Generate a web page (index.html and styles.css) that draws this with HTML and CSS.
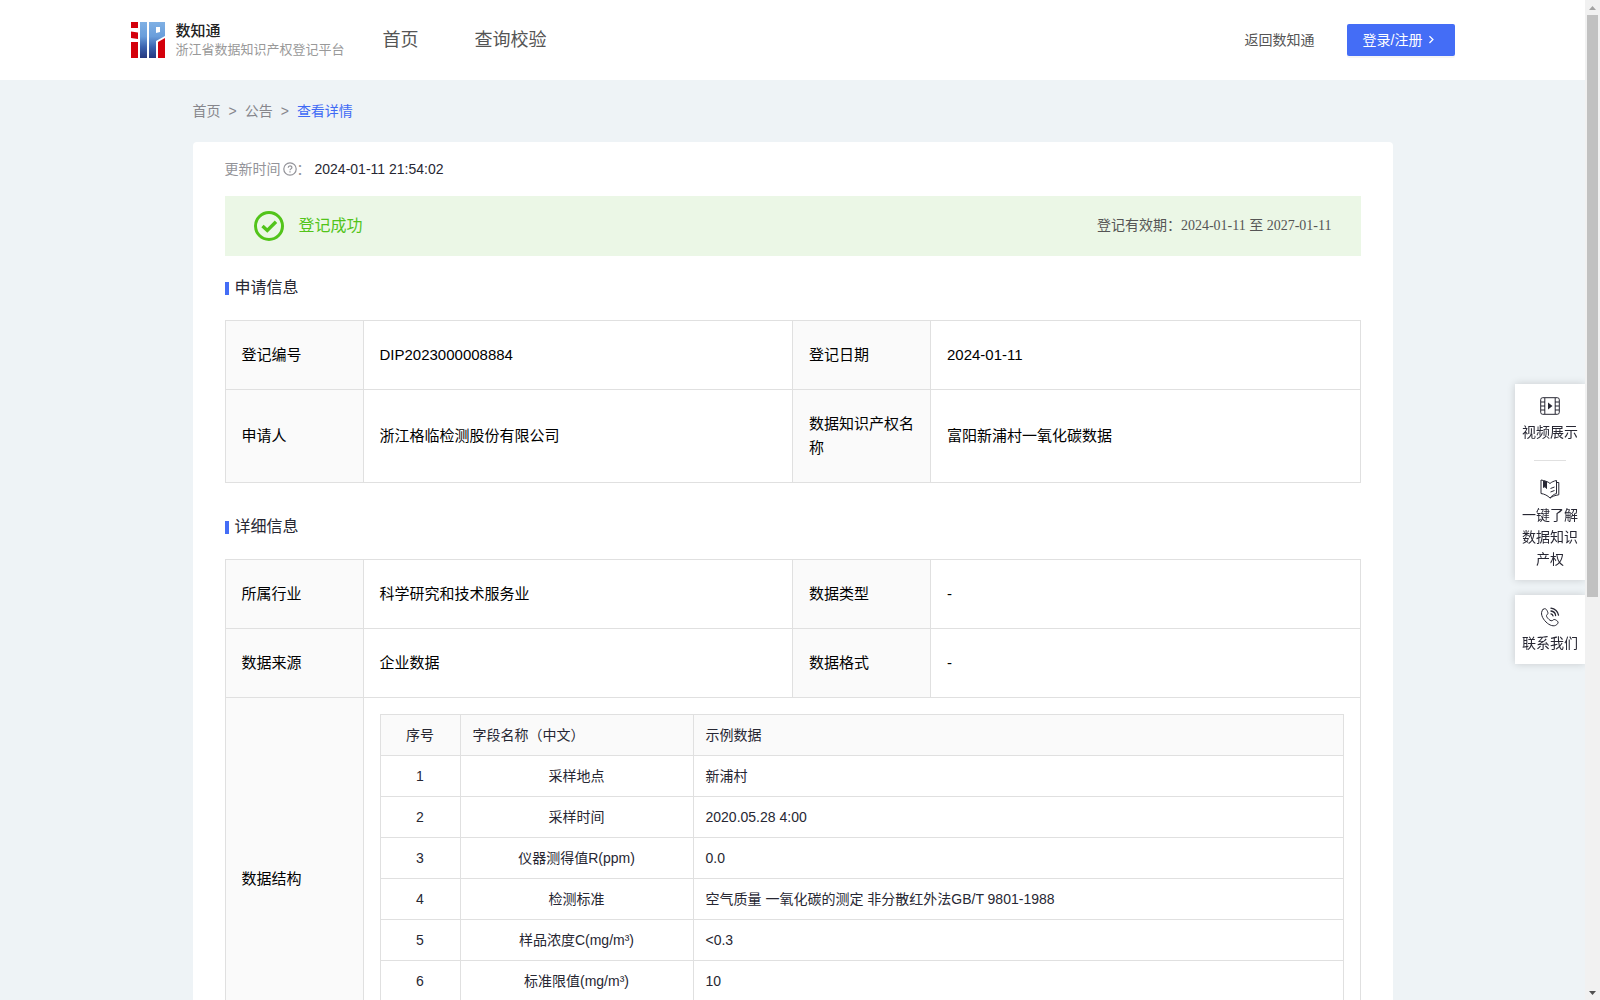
FILE: index.html
```html
<!DOCTYPE html>
<html lang="zh-CN">
<head>
<meta charset="utf-8">
<meta name="viewport" content="width=device-width, initial-scale=1">
<title>数知通 - 查看详情</title>
<link rel="stylesheet" href="styles.css">
</head>
<body>
<div class="page">
  <header class="header">
    <div class="header-inner">
      <a class="brand" href="#">
        <svg class="brand-logo" viewBox="0 0 34 36" aria-hidden="true">
          <defs>
            <linearGradient id="blue" x1="0" y1="0" x2="0" y2="1">
              <stop offset="0" stop-color="#7fb0e4"/>
              <stop offset=".4" stop-color="#6a9edb"/>
              <stop offset=".7" stop-color="#3b62ae"/>
              <stop offset="1" stop-color="#26387f"/>
            </linearGradient>
          </defs>
          <path fill="#d4000b" d="M0 0h7v6H0zM0 9.500l7 1V17l-7-1zM0 20h7v16H0zM27 20l7-4v20h-7z"/>
          <path fill="url(#blue)" d="M9 0h7v36H9zM18 0h16v14l-9 5v17h-7zM25 5v6l4-1V5z" fill-rule="evenodd"/>
        </svg>
        <span class="brand-text">
          <span class="brand-name">数知通</span>
          <span class="brand-sub">浙江省数据知识产权登记平台</span>
        </span>
      </a>
      <nav class="nav">
        <a href="#">首页</a>
        <a href="#">查询校验</a>
      </nav>
      <div class="header-actions">
        <a class="back" href="#">返回数知通</a>
        <button class="login" type="button">
          <span>登录/注册</span>
          <svg width="14" height="14" viewBox="0 0 14 14" fill="none" stroke="currentColor" stroke-width="1.500" aria-hidden="true"><path d="M4 2.500 8 6.500l-4 4"/></svg>
        </button>
      </div>
    </div>
  </header>

  <main class="main">
    <nav class="crumbs" aria-label="面包屑">
      <a href="#">首页</a><span>&gt;</span><a href="#">公告</a><span>&gt;</span><a class="current" href="#">查看详情</a>
    </nav>

    <div class="card">
      <div class="updated">
        <span>更新时间</span>
        <svg width="14" height="14" viewBox="0 0 14 14" fill="none" stroke="currentColor" stroke-width="1.200" aria-hidden="true">
          <circle cx="7" cy="7" r="6.200"/><path d="M5.200 5.800c0-2.500 3.700-2.500 3.700-.200 0 1.200-1.900 1.400-1.900 2.700M7 9.300v1.200"/>
        </svg>
        <span>：</span>
        <time class="updated-time">2024-01-11 21:54:02</time>
      </div>

      <div class="banner">
        <svg width="30" height="30" viewBox="0 0 30 30" fill="none" stroke="#52c41a" aria-hidden="true">
          <circle cx="15" cy="15" r="13.500" stroke-width="3"/><path d="m8.500 15 4.800 4.500 8.700-8.700" stroke-width="3.400"/>
        </svg>
        <span class="banner-title">登记成功</span>
        <span class="validity">登记有效期：2024-01-11 至 2027-01-11</span>
      </div>

      <section class="section">
        <h2>申请信息</h2>
        <table class="info">
          <colgroup><col class="label-col"><col><col class="label-col"><col></colgroup>
          <tbody>
            <tr><th scope="row">登记编号</th><td>DIP2023000008884</td><th scope="row">登记日期</th><td>2024-01-11</td></tr>
            <tr><th scope="row">申请人</th><td>浙江格临检测股份有限公司</td><th scope="row">数据知识产权名称</th><td>富阳新浦村一氧化碳数据</td></tr>
          </tbody>
        </table>
      </section>

      <section class="section section-detail">
        <h2>详细信息</h2>
        <table class="info">
          <colgroup><col class="label-col"><col><col class="label-col"><col></colgroup>
          <tbody>
            <tr><th scope="row">所属行业</th><td>科学研究和技术服务业</td><th scope="row">数据类型</th><td>-</td></tr>
            <tr><th scope="row">数据来源</th><td>企业数据</td><th scope="row">数据格式</th><td>-</td></tr>
            <tr>
              <th scope="row">数据结构</th>
              <td class="nested" colspan="3">
                <table class="fields">
                  <colgroup><col class="index-col"><col class="name-col"><col></colgroup>
                  <thead><tr><th class="center" scope="col">序号</th><th scope="col">字段名称（中文）</th><th scope="col">示例数据</th></tr></thead>
                  <tbody>
                    <tr><td>1</td><td>采样地点</td><td>新浦村</td></tr>
                    <tr><td>2</td><td>采样时间</td><td>2020.05.28 4:00</td></tr>
                    <tr><td>3</td><td>仪器测得值R(ppm)</td><td>0.0</td></tr>
                    <tr><td>4</td><td>检测标准</td><td>空气质量 一氧化碳的测定 非分散红外法GB/T 9801-1988</td></tr>
                    <tr><td>5</td><td>样品浓度C(mg/m³)</td><td>&lt;0.3</td></tr>
                    <tr><td>6</td><td>标准限值(mg/m³)</td><td>10</td></tr>
                    <tr><td></td><td></td><td></td></tr>
                  </tbody>
                </table>
              </td>
            </tr>
          </tbody>
        </table>
      </section>
    </div>
  </main>
</div>

<aside class="tools">
  <div class="tool-card">
    <a class="tool" href="#">
      <svg width="20" height="20" viewBox="0 0 20 20" fill="none" stroke="currentColor" aria-hidden="true">
        <rect x=".700" y="1.700" width="18.600" height="16.600" rx="2"/><path d="M4.800 2v16M15.200 2v16M1 6h4M1 10h4M1 14h4M15 6h4M15 10h4M15 14h4"/><path fill="currentColor" stroke="none" d="M8 6.500v7l4.500-3.500z"/>
      </svg>
      <span>视频展示</span>
    </a>
    <hr>
    <a class="tool" href="#">
      <svg width="20" height="20" viewBox="0 0 20 20" fill="none" stroke="currentColor" stroke-linejoin="round" aria-hidden="true">
        <path d="M10 4.500C8 2.500 4 1.500 1 1v13.500c3.500.500 6.500 2 9 4.500 1.500-2 3.500-3.500 6.500-4.500V1.500C14 2 11.500 3 10 4.500z"/><path d="M10 19.300c2-1.800 5-3 8.800-3.500V3.500h-2M10.500 9.500l4-1.500M10.500 13l4-1.500"/><path fill="currentColor" d="M3.500 2v6.500l1.500-1 1.500 2V3z"/>
      </svg>
      <span>一键了解数据知识产权</span>
    </a>
  </div>
  <div class="tool-card">
    <a class="tool" href="#">
      <svg width="20" height="20" viewBox="0 0 20 20" fill="none" stroke="currentColor" stroke-linejoin="round" stroke-linecap="round" aria-hidden="true">
        <path d="M3 2.500C4.500 1 6 1.500 7 3.500s1.300 2.800.500 3.700c-1 1-1.500 1.500-.500 3s2.500 3 4 3.500 2-1 3-1.200 2.500.800 3.500 1.700c1.200 1 .500 2.300-.800 3.500C14 20 9.500 18.500 6 15S-.500 6 3 2.500z"/><path stroke-width="1.300" d="M11 4c2.500.300 4.300 2 4.600 4.500M11 6.800c1.200.200 1.700.900 2 2M11 1.200c4 .300 7 3.500 7.500 7"/>
      </svg>
      <span>联系我们</span>
    </a>
  </div>
</aside>

<div class="scrollbar" aria-hidden="true">
  <svg width="15" height="15" viewBox="0 0 15 15"><path fill="#a3a3a3" d="M4 10h7L7.500 6z"/></svg>
  <div class="track"><div class="thumb"></div></div>
  <svg width="15" height="15" viewBox="0 0 15 15"><path fill="#505050" d="M4 6h7l-3.500 4z"/></svg>
</div>
</body>
</html>
```
FILE: styles.css
```css
* { box-sizing: border-box; }

body {
  display: flex;
  height: 100vh;
  margin: 0;
  overflow: hidden;
  background: #eef3f6;
  color: #272733;
  font: 14px/22px "Liberation Sans", "Noto Sans CJK SC", sans-serif;
}

a { color: inherit; text-decoration: none; }

.page {
  flex: 1;
  min-width: 0;
  overflow-y: auto;
  scrollbar-width: none;
}

/* Header */
.header { background: #fff; }

.header-inner {
  display: flex;
  align-items: center;
  max-width: 1324px;
  height: 80px;
  margin: 0 auto;
}

.brand { display: flex; align-items: center; gap: 11px; }
.brand-logo { width: 34px; height: 36px; }
.brand-text { display: flex; flex-direction: column; white-space: nowrap; }
.brand-name { color: #222; font-size: 15px; line-height: 20px; font-weight: 500; }
.brand-sub { color: #999; font-size: 13px; line-height: 18px; }

.nav {
  display: flex;
  gap: 56px;
  margin-left: 38px;
  color: #555;
  font-size: 18px;
  line-height: 24px;
}

.header-actions {
  display: flex;
  align-items: center;
  gap: 32px;
  margin-left: auto;
  color: #555;
}

.login {
  display: flex;
  align-items: center;
  gap: 4px;
  width: 108px;
  height: 32px;
  padding: 0 16px;
  border: 0;
  border-radius: 2px;
  background: #446df6;
  box-shadow: 0 2px 0 rgba(0, 0, 0, 0.04);
  color: #fff;
  font: inherit;
  white-space: nowrap;
}

/* Page body */
.main { max-width: 1200px; margin: 0 auto; }

.crumbs {
  display: flex;
  gap: 8px;
  padding: 20px 0;
  color: #86868c;
}
.crumbs .current { color: #3f6af5; }

.card {
  padding: 16px 32px 32px;
  border-radius: 4px;
  background: #fff;
}

.updated { display: flex; align-items: center; color: #939399; }
.updated svg { margin-left: 2px; }
.updated-time { margin-left: 4px; color: #272733; }

.banner {
  display: flex;
  align-items: center;
  gap: 15px;
  height: 60px;
  margin-top: 16px;
  padding: 0 29px;
  background: #ebf7e6;
}
.banner-title { color: #52c41a; font-size: 16px; line-height: 24px; }
.validity {
  margin-left: auto;
  color: #555;
  font-family: "Liberation Serif", "Noto Sans CJK SC", serif;
}

.section { margin-top: 20px; }
.section-detail { margin-top: 32px; }

.section h2 {
  display: flex;
  align-items: center;
  gap: 6px;
  margin: 0 0 20px;
  font-size: 16px;
  line-height: 24px;
  font-weight: 400;
}
.section h2::before {
  content: "";
  width: 4px;
  height: 13px;
  background: #446df6;
}

table {
  width: 100%;
  border-collapse: collapse;
  table-layout: fixed;
}
th, td {
  border: 1px solid #e0e0e0;
  font-weight: 400;
  text-align: left;
}
th { background: #fafafa; }

.info { color: #000; font-size: 15px; line-height: 24px; }
.info > tbody > tr > * { padding: 22px 12px 22px 16px; }
.info > tbody > tr > .nested { padding: 16px; }
.label-col { width: 138px; }

.fields { color: #272733; font-size: 14px; line-height: 22px; }
.fields th, .fields td { height: 41px; padding: 9px 12px; }
.fields td:nth-child(-n+2), .fields .center { text-align: center; }
.index-col { width: 80px; }
.name-col { width: 233px; }

/* Floating shortcuts */
.tools {
  position: fixed;
  top: 384px;
  right: 15px;
  display: flex;
  flex-direction: column;
  gap: 15px;
  width: 70px;
}
.tool-card {
  padding: 12px 7px 10px;
  background: #fff;
  box-shadow: 0 0 8px rgba(0, 0, 0, 0.16);
  clip-path: inset(-8px 0 -8px -8px);
}
.tool {
  display: flex;
  flex-direction: column;
  align-items: center;
  gap: 5px;
  text-align: center;
}
.tool-card hr {
  width: 32px;
  margin: 17px auto 18px;
  border: 0;
  border-top: 1px solid #e0e0e0;
}

/* Scrollbar */
.scrollbar {
  display: flex;
  flex-direction: column;
  width: 15px;
  background: #f1f1f1;
}
.scrollbar svg { display: block; }
.track { flex: 1; padding: 0 2px; }
.thumb { height: 60%; background: #c1c1c1; }
```
